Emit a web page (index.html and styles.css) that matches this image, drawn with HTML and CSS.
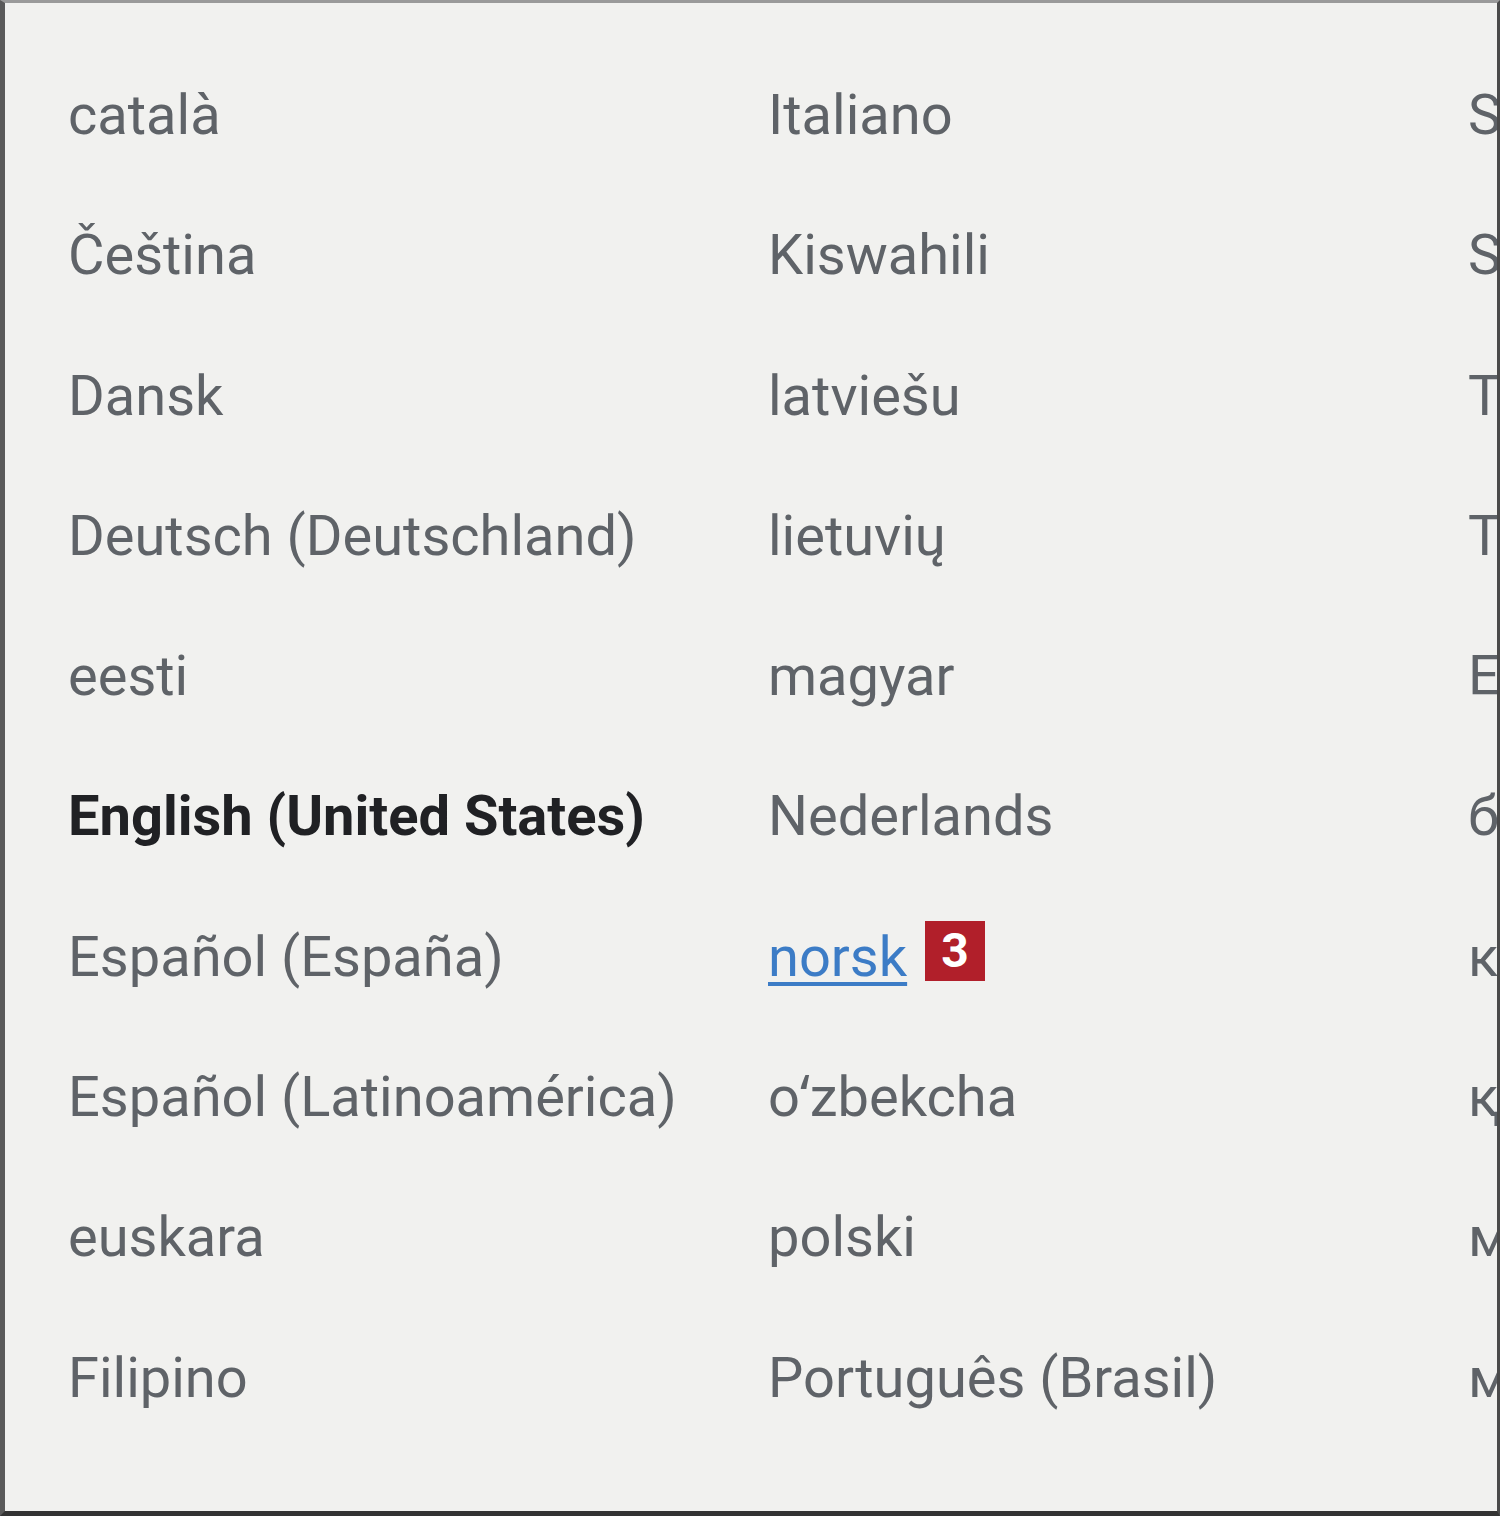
FILE: index.html
```html
<!DOCTYPE html>
<html lang="en">
<head>
<meta charset="utf-8">
<title>Languages</title>
<link rel="stylesheet" href="styles.css">
</head>
<body>
<div class="frame">
  <ul class="lang-grid">
    <li class="lang">català</li>
    <li class="lang">Čeština</li>
    <li class="lang">Dansk</li>
    <li class="lang">Deutsch (Deutschland)</li>
    <li class="lang">eesti</li>
    <li class="lang current">English (United States)</li>
    <li class="lang">Español (España)</li>
    <li class="lang">Español (Latinoamérica)</li>
    <li class="lang">euskara</li>
    <li class="lang">Filipino</li>

    <li class="lang">Italiano</li>
    <li class="lang">Kiswahili</li>
    <li class="lang">latviešu</li>
    <li class="lang">lietuvių</li>
    <li class="lang">magyar</li>
    <li class="lang">Nederlands</li>
    <li class="lang"><a class="lang-link" href="#">norsk</a><span class="badge">3</span></li>
    <li class="lang">oʻzbekcha</li>
    <li class="lang">polski</li>
    <li class="lang">Português (Brasil)</li>

    <li class="lang">Slovenčina</li>
    <li class="lang">Srpski</li>
    <li class="lang">Tiếng Việt</li>
    <li class="lang">Türkçe</li>
    <li class="lang">Ελληνικά</li>
    <li class="lang">български</li>
    <li class="lang">кыргызча</li>
    <li class="lang">қазақ тілі</li>
    <li class="lang">македонски</li>
    <li class="lang">монгол</li>
  </ul>
</div>
</body>
</html>
```
FILE: styles.css
```css
html, body {
  margin: 0;
  padding: 0;
}
body {
  background: #f1f1ef;
  font-family: Roboto, "Noto Sans", "DejaVu Sans", sans-serif;
}
.frame {
  box-sizing: border-box;
  width: 1500px;
  height: 1516px;
  overflow: hidden;
  background: #f1f1ef;
  border-top: 3px solid #9a9a9a;
  border-left: 5px solid #5a5a5a;
  border-right: 3px solid #4a4a4a;
  border-bottom: 5px solid #333333;
}
.lang-grid {
  list-style: none;
  margin: 0;
  padding: 42px 0 0 63px;
  display: grid;
  grid-auto-flow: column;
  grid-template-rows: repeat(10, 140.3px);
  grid-auto-columns: 700px;
  width: 2200px;
}
.lang {
  font-size: 56px;
  line-height: 140px;
  height: 140px;
  color: #5f6368;
  white-space: nowrap;
  display: flex;
  align-items: center;
  margin-top: -70px;
  padding-top: 70px;
  box-sizing: content-box;
}
.current {
  color: #202124;
  font-weight: 700;
}
.lang-link {
  color: #3c7cc6;
  text-decoration: underline;
  text-decoration-thickness: 4px;
  text-underline-offset: 6px;
}
.badge {
  display: inline-flex;
  align-items: center;
  justify-content: center;
  width: 60px;
  height: 60px;
  margin-left: 18px;
  background: #b11f2a;
  color: #ffffff;
  font-weight: 700;
  font-size: 48px;
  line-height: 1;
  margin-top: -12px;
}
```
